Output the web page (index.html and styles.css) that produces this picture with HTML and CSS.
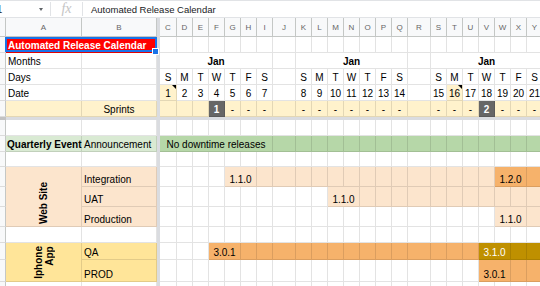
FILE: index.html
```html
<!DOCTYPE html>
<html lang="en">
<head>
  <meta charset="UTF-8">
  <title>Automated Release Calendar</title>
  <link rel="stylesheet" href="styles.css">
</head>
<body>
  <div class="formula-bar">
    <div class="name-box"><span class="name-ref">A1</span><span class="caret"></span></div>
    <div class="bar-sep"></div>
    <div class="fx">fx</div>
    <div class="bar-sep"></div>
    <div class="formula-text">Automated Release Calendar</div>
  </div>

  <div class="sheet" id="sheet">
    <div class="freeze-col"></div>
    <div class="freeze-row"></div>
  </div>

  <script>
    const sheet = document.getElementById("sheet");

    function cell(cls, text) {
      const div = document.createElement("div");
      div.className = "cell " + (cls || "");
      if (text) div.textContent = text;
      sheet.appendChild(div);
      return div;
    }

    function blanks(n, cls) {
      for (let i = 0; i < n; i++) cell(cls);
    }

    function rowHead() {
      cell("rh");
    }

    function week(letters) {
      letters.split("").forEach(d => cell("center", d));
    }

    function dates(from, to, noted) {
      for (let d = from; d <= to; d++) {
        cell(d === noted ? "center yel note" : "center", String(d));
      }
    }

    function dashes(n) {
      for (let i = 0; i < n; i++) cell("yel center", "-");
    }

    function vertical(cls, html) {
      const c = cell(cls + " vcell");
      const span = document.createElement("span");
      span.className = "vlabel";
      span.innerHTML = html;
      c.appendChild(span);
    }

    // column letters
    cell("corner");
    "ABCDEFGHIJKLMNOPQRSTUVWXY".split("").forEach(l => cell("col-hdr", l));

    // title
    rowHead();
    cell("title s2 bold", "Automated Release Calendar");
    blanks(23);

    // months
    rowHead();
    cell("", "Months"); cell();
    cell("s7 center bold", "Jan"); cell();
    cell("s7 center bold", "Jan"); cell();
    cell("s7 center bold", "Jan");

    // days
    rowHead();
    cell("", "Days"); cell();
    week("SMTWTFS"); cell();
    week("SMTWTFS"); cell();
    week("SMTWTFS");

    // dates
    rowHead();
    cell("", "Date"); cell();
    dates(1, 7, 1); cell();
    dates(8, 14); cell();
    dates(15, 21, 16);

    // sprints
    rowHead();
    cell("yel"); cell("yel center", "Sprints");
    blanks(3, "yel");
    cell("dark", "1"); dashes(3);
    cell("yel"); dashes(7);
    cell("yel"); dashes(3);
    cell("dark", "2"); dashes(3);

    rowHead(); blanks(25);

    // quarterly event
    rowHead();
    cell("green-l bold tight", "Quarterly Event");
    cell("green-l", "Announcement");
    cell("green s7 center", "No downtime releases");
    blanks(16, "green");

    rowHead(); blanks(25);

    // web site
    rowHead();
    vertical("peach rs3", "Web Site");
    cell("peach", "Integration");
    blanks(4);
    cell("peach s2 center", "1.1.0");
    blanks(14, "peach");
    cell("orange s2 center", "1.2.0");
    cell("orange");

    rowHead();
    cell("peach", "UAT");
    blanks(10);
    cell("peach s2 center", "1.1.0");
    blanks(11, "peach");

    rowHead();
    cell("peach", "Production");
    blanks(20);
    cell("peach s2 center", "1.1.0");
    cell("peach");

    rowHead(); blanks(25);

    // iphone app
    rowHead();
    vertical("amber rs2 app", "Iphone<br>App");
    cell("amber", "QA");
    blanks(3);
    cell("orange s2 center", "3.0.1");
    blanks(14, "orange");
    cell("gold s2 center", "3.1.0");
    blanks(2, "gold");

    rowHead();
    cell("amber", "PROD");
    blanks(19);
    cell("orange s2 center", "3.0.1");
    blanks(2, "orange");

    rowHead(); blanks(25);
  </script>
</body>
</html>
```

FILE: styles.css
```css
body {
  margin: 0;
  width: 540px;
  height: 286px;
  overflow: hidden;
  background: #fff;
  font-family: "Liberation Sans", Arial, sans-serif;
  color: #000;
}

/* formula bar */
.formula-bar {
  display: flex;
  align-items: center;
  height: 18px;
  box-sizing: border-box;
  border-top: 1px solid #e1e3e6;
  border-bottom: 1px solid #e1e3e6;
}
.name-box {
  width: 50px;
  display: flex;
  align-items: center;
  overflow: hidden;
  font-size: 10px;
  color: #202124;
}
.name-ref {
  margin-left: -10px;
  flex: 1;
}
.caret {
  width: 0;
  height: 0;
  margin-right: 7px;
  border-left: 2.5px solid transparent;
  border-right: 2.5px solid transparent;
  border-top: 3px solid #5f6368;
}
.bar-sep {
  width: 1px;
  height: 14px;
  background: #e1e3e6;
}
.fx {
  width: 31px;
  text-align: center;
  font-family: "Liberation Serif", serif;
  font-style: italic;
  font-size: 14px;
  line-height: 14px;
  color: #c4c4c4;
}
.formula-text {
  padding: 1px 0 0 8px;
  font-size: 9.5px;
  color: #202124;
}

/* grid */
.sheet {
  display: grid;
  grid-template-columns: 6px 76px 75px 3px 17px repeat(6, 16px) 23px repeat(7, 16px) 23px repeat(7, 16px);
  grid-template-rows: 19px 16px 16px 16px 16px 16px 3px 16px 16px 15px 20px 20px 20px 16px 17px 22px 16px;
}
.freeze-col {
  grid-column: 4 / 5;
  grid-row: 1 / -1;
  background: #dadce0;
}
.freeze-row {
  grid-column: 1 / -1;
  grid-row: 7 / 8;
  background: linear-gradient(to right, #c2c2c2 6px, #dadce0 6px);
}

.cell {
  box-sizing: border-box;
  border-right: 1px solid rgba(0, 0, 0, 0.11);
  border-bottom: 1px solid rgba(0, 0, 0, 0.11);
  display: flex;
  align-items: flex-end;
  padding: 0 2px;
  font-size: 10px;
  line-height: 13px;
  white-space: nowrap;
  overflow: hidden;
}

.corner, .col-hdr, .rh {
  background: #f8f9fa;
  border-color: #c4c7c5;
}
.rh {
  border-bottom-color: #dcdcdc;
  padding: 0;
}
.col-hdr {
  justify-content: center;
  align-items: center;
  font-size: 8px;
  color: #666;
}

.s2 { grid-column: span 2; }
.s7 { grid-column: span 7; }
.rs2 { grid-row: span 2; }
.rs3 { grid-row: span 3; }

.bold { font-weight: bold; }
.center { justify-content: center; }
.tight { padding: 0 0 0 1px; overflow: visible; }

.title {
  position: relative;
  overflow: visible;
  background: #ff0000;
  color: #fff;
}
.title::after {
  content: "";
  position: absolute;
  left: -1px;
  right: -1px;
  top: 0;
  bottom: 0;
  border: 2px solid #1a73e8;
}
.title::before {
  content: "";
  position: absolute;
  right: -3px;
  bottom: -3px;
  width: 5px;
  height: 5px;
  background: #1a73e8;
  border: 1px solid #fff;
  z-index: 1;
}

.note { position: relative; }
.note::after {
  content: "";
  position: absolute;
  top: 0;
  right: 0;
  border-top: 4px solid #000;
  border-left: 4px solid transparent;
}

.yel { background: #fff2cc; }
.dark {
  background: #666;
  color: #fff;
  font-weight: bold;
  justify-content: center;
}
.green-l { background: #d9ead3; }
.green { background: #b6d7a8; }
.peach { background: #fce5cd; }
.orange { background: #f6b26b; }
.gold { background: #bf9000; color: #fff; }
.amber { background: #ffe599; }

.vcell {
  justify-content: center;
  padding-bottom: 2px;
}
.vlabel {
  writing-mode: vertical-rl;
  transform: rotate(180deg);
  font-weight: bold;
  line-height: 11px;
}
.app .vlabel {
  text-align: end;
}
```
